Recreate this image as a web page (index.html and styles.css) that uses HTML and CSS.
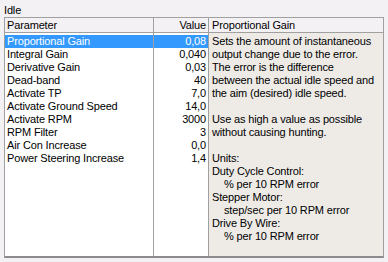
FILE: index.html
```html
<!DOCTYPE html>
<html lang="en">
<head>
  <meta charset="UTF-8">
  <title>Idle</title>
  <link rel="stylesheet" href="styles.css">
</head>
<body>

  <div class="title">Idle</div>

  <div class="frame">
    <div class="col col-name">
      <div class="head">Parameter</div>
      <div class="rows">
        <div class="row selected">Proportional Gain</div>
        <div class="row">Integral Gain</div>
        <div class="row">Derivative Gain</div>
        <div class="row">Dead-band</div>
        <div class="row">Activate TP</div>
        <div class="row">Activate Ground Speed</div>
        <div class="row">Activate RPM</div>
        <div class="row">RPM Filter</div>
        <div class="row">Air Con Increase</div>
        <div class="row">Power Steering Increase</div>
      </div>
    </div>

    <div class="col col-value">
      <div class="head">Value</div>
      <div class="rows">
        <div class="row selected">0,08</div>
        <div class="row">0,040</div>
        <div class="row">0,03</div>
        <div class="row">40</div>
        <div class="row">7,0</div>
        <div class="row">14,0</div>
        <div class="row">3000</div>
        <div class="row">3</div>
        <div class="row">0,0</div>
        <div class="row">1,4</div>
      </div>
    </div>

    <div class="col col-desc">
      <div class="head">Proportional Gain</div>
      <div class="desc">
        <p>Sets the amount of instantaneous<br>
          output change due to the error.<br>
          The error is the difference<br>
          between the actual idle speed and<br>
          the aim (desired) idle speed.</p>
        <p>Use as high a value as possible<br>
          without causing hunting.</p>
        <p>Units:<br>
          Duty Cycle Control:<br>
          <span class="indent">% per 10 RPM error</span><br>
          Stepper Motor:<br>
          <span class="indent">step/sec per 10 RPM error</span><br>
          Drive By Wire:<br>
          <span class="indent">% per 10 RPM error</span></p>
      </div>
    </div>
  </div>

</body>
</html>
```

FILE: styles.css
```css
body {
  margin: 0;
  background-color: #f4f1f4;
  font-family: "Liberation Sans", Arial, sans-serif;
  font-size: 11px;
  letter-spacing: -0.15px;
  color: #000;
}

.title {
  height: 14px;
  line-height: 14px;
  padding: 3px 0 0 4px;
}

.frame {
  display: flex;
  width: 378px;
  height: 238px;
  margin-left: 4px;
  border: 1px solid #a0a0a0;
  border-bottom: 2px solid #8c8c8c;
}

.col {
  display: flex;
  flex-direction: column;
  border-right: 1px solid #a0a0a0;
}

.col-name {
  width: 148px;
  background-color: #fff;
}

.col-value {
  width: 54px;
  background-color: #fff;
  text-align: right;
}

.col-desc {
  flex: 1;
  border-right: none;
  background-color: #eeebe7;
}

.head {
  height: 14px;
  line-height: 14px;
  padding: 0 2px;
  background-color: #f4f1f4;
  border-bottom: 1px solid #a0a0a0;
}

.col-desc .head {
  padding-left: 3px;
}

.rows {
  padding-top: 2px;
}

.row {
  height: 13px;
  line-height: 13px;
  padding: 0 2px;
  white-space: nowrap;
}

.row.selected {
  background-color: #3399ff;
  color: #fff;
}

.desc {
  padding: 2px 0 0 3px;
  line-height: 13px;
  white-space: nowrap;
}

.desc p {
  margin: 0 0 13px;
}

.indent {
  padding-left: 12px;
}
```
